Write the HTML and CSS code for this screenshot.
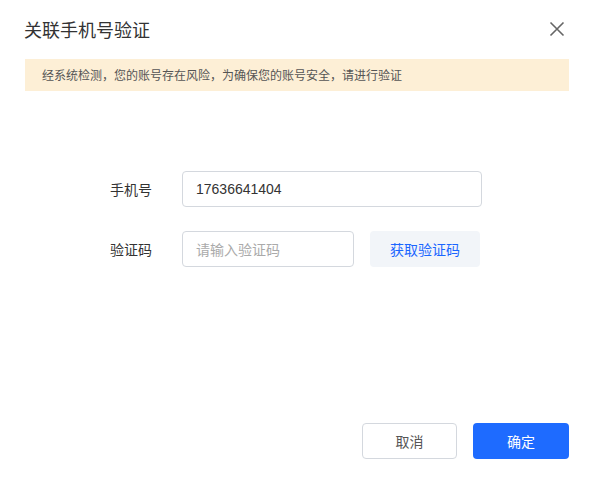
FILE: index.html
```html
<!DOCTYPE html>
<html lang="zh">
<head>
<meta charset="utf-8">
<title>关联手机号验证</title>
<link rel="stylesheet" href="styles.css">
</head>
<body>
<div class="dialog">
  <div class="header">
    <div class="title">关联手机号验证</div>
    <button class="close" aria-label="关闭">
      <svg width="16" height="16" viewBox="0 0 16 16"><path d="M1.5 1.5L14.5 14.5M14.5 1.5L1.5 14.5" stroke="#666" stroke-width="1.6" fill="none"/></svg>
    </button>
  </div>
  <div class="notice">经系统检测，您的账号存在风险，为确保您的账号安全，请进行验证</div>
  <div class="form">
    <div class="row">
      <label class="label">手机号</label>
      <div class="input wide">17636641404</div>
    </div>
    <div class="row">
      <label class="label">验证码</label>
      <div class="input narrow placeholder">请输入验证码</div>
      <button class="code-btn">获取验证码</button>
    </div>
  </div>
  <div class="footer">
    <button class="btn cancel">取消</button>
    <button class="btn primary">确定</button>
  </div>
</div>
</body>
</html>
```

FILE: styles.css
```css
html, body {
  margin: 0;
  padding: 0;
  background: #fff;
}
body {
  font-family: "Noto Sans CJK SC", "Liberation Sans", sans-serif;
  color: #333;
}
.dialog {
  width: 595px;
  height: 483px;
  display: flex;
  flex-direction: column;
  box-sizing: border-box;
}
.header {
  display: flex;
  justify-content: space-between;
  align-items: center;
  padding: 16px 30px 0 24px;
  height: 26px;
}
.title {
  font-size: 18px;
  line-height: 26px;
  color: #333;
}
.close {
  border: 0;
  background: none;
  padding: 0;
  width: 16px;
  height: 16px;
  display: flex;
}
.notice {
  margin: 17px 26px 0 25px;
  height: 32px;
  line-height: 32px;
  background: #fdefd6;
  padding-left: 17px;
  font-size: 12px;
  color: #555;
}
.form {
  margin-top: 80px;
  padding-left: 110px;
  display: flex;
  flex-direction: column;
  gap: 24px;
}
.row {
  display: flex;
  align-items: center;
  height: 36px;
}
.label {
  width: 72px;
  font-size: 14px;
  color: #333;
}
.input {
  box-sizing: border-box;
  height: 36px;
  border: 1px solid #d4d8de;
  border-radius: 4px;
  padding-left: 13px;
  font-size: 14px;
  line-height: 34px;
  color: #333;
  font-family: "Liberation Sans", "Noto Sans CJK SC", sans-serif;
}
.wide { width: 300px; }
.narrow { width: 172px; }
.placeholder {
  color: #aaa;
  font-family: "Noto Sans CJK SC", sans-serif;
}
.code-btn {
  margin-left: 16px;
  width: 110px;
  height: 36px;
  border: 0;
  border-radius: 4px;
  background: #f2f5f9;
  color: #1a66ff;
  font-size: 14px;
  font-family: "Noto Sans CJK SC", sans-serif;
  padding: 0;
}
.footer {
  margin-top: auto;
  margin-bottom: 24px;
  padding-right: 26px;
  display: flex;
  justify-content: flex-end;
  gap: 16px;
}
.btn {
  width: 96px;
  height: 36px;
  border-radius: 4px;
  font-size: 14px;
  font-family: "Noto Sans CJK SC", sans-serif;
  padding: 0;
}
.cancel {
  width: 95px;
  background: #fff;
  border: 1px solid #d4d8de;
  color: #555;
}
.primary {
  background: #1e6bff;
  border: 0;
  color: #fff;
}
```
